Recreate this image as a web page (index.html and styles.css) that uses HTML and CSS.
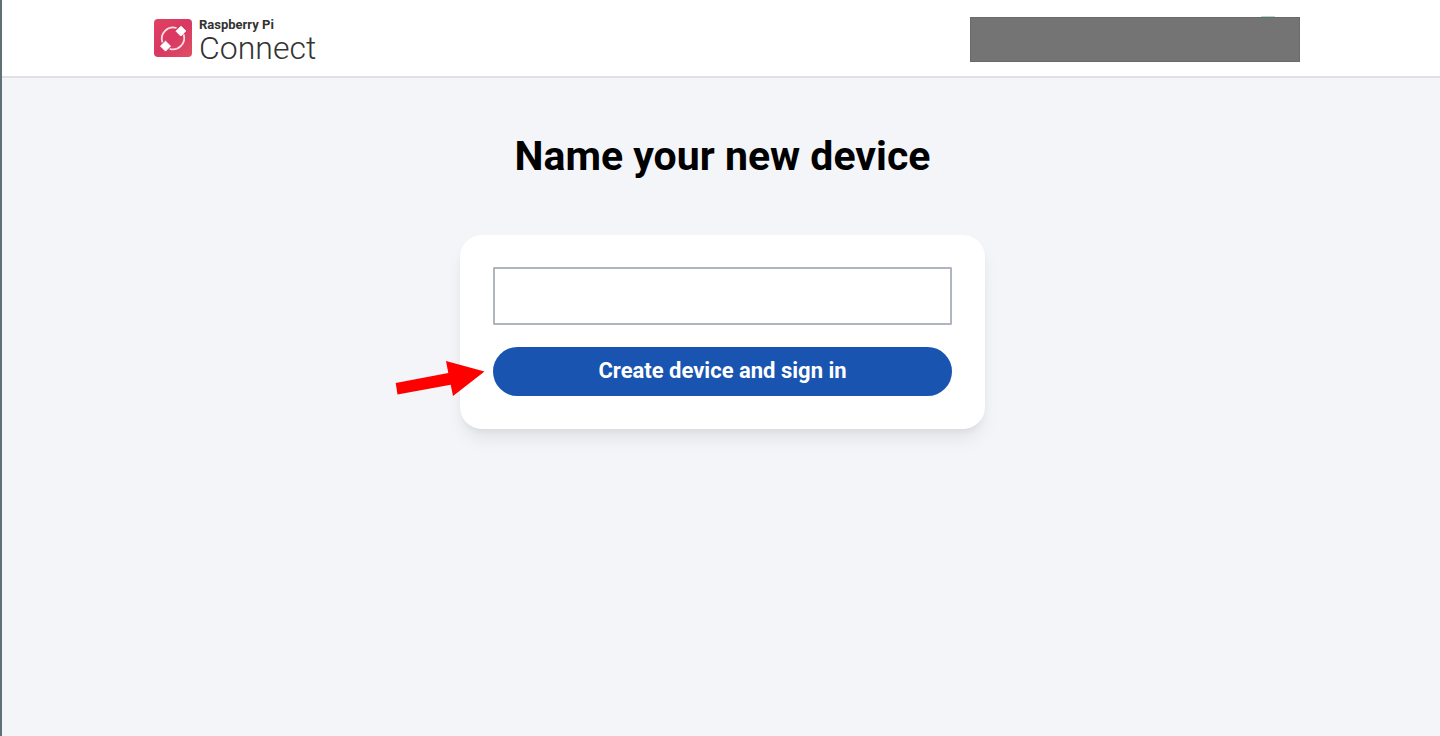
FILE: index.html
```html
<!DOCTYPE html>
<html lang="en">
<head>
<meta charset="utf-8">
<meta name="viewport" content="width=device-width, initial-scale=1">
<title>Raspberry Pi Connect</title>
<link rel="stylesheet" href="styles.css">
</head>
<body>
<header class="header">
  <div class="header-inner">
    <a class="brand" href="#">
      <svg class="brand-icon" viewBox="0 0 38 38" aria-hidden="true">
        <defs>
          <linearGradient id="brand-fill" x1="0" y1="0" x2="1" y2="1">
            <stop offset="0" stop-color="#df4260"/>
            <stop offset="0.5" stop-color="#d93862"/>
            <stop offset="1" stop-color="#df5064"/>
          </linearGradient>
        </defs>
        <rect width="38" height="38" rx="4" fill="url(#brand-fill)"/>
        <g fill="none" stroke="#fbdde3" stroke-width="1.8">
          <path d="M22.6 9A11.3 11.3 0 0 0 8.4 23.4"/>
          <path d="M29.6 15.4A11.3 11.3 0 0 1 15.6 29.8"/>
        </g>
        <path d="M27 7.2l4.8 4.8-5 5-4.8-4.8zM11.5 22.2l5 4.9-5 5-5-5z" fill="#fff" stroke="#fff" stroke-linejoin="round"/>
      </svg>
      <span class="brand-text">
        <span class="brand-top">Raspberry Pi</span>
        <span class="brand-name">Connect</span>
      </span>
    </a>
    <div class="account"></div>
  </div>
</header>
<main class="main">
  <h1 class="title">Name your new device</h1>
  <form class="card">
    <input class="name-input" type="text" aria-label="Device name">
    <button class="submit" type="button">Create device and sign in</button>
    <svg class="arrow" viewBox="0 0 90 36" aria-hidden="true">
      <path d="M0.7 22L53.3 12L51 0L89.5 10.5L58 35L55.7 23.7L2.5 33.5z" fill="#f00"/>
    </svg>
  </form>
</main>
</body>
</html>
```
FILE: styles.css
```css
* {
  box-sizing: border-box;
}

body {
  margin: 0;
  min-height: 100vh;
  border-left: 2px solid #5f7176;
  background: #f3f5f8;
  color: #000;
  font-family: Roboto, "Liberation Sans", sans-serif;
}

.header {
  border-bottom: 2px solid #e0e1e3;
  background: #fff;
}

.header-inner {
  display: flex;
  align-items: flex-start;
  justify-content: space-between;
  padding: 17px 140px 13px 152px;
}

.brand {
  display: flex;
  align-items: flex-start;
  gap: 7px;
  color: #333;
  text-decoration: none;
}

.brand-icon {
  width: 38px;
  height: 38px;
  margin-top: 2px;
}

.brand-text {
  display: flex;
  flex-direction: column;
}

.brand-top {
  font-size: 13px;
  font-weight: 700;
  line-height: 16px;
}

.brand-name {
  font-size: 32px;
  font-weight: 300;
  line-height: 30px;
}

.account {
  position: relative;
  width: 330px;
  height: 45px;
  border: 1px solid #6a6a6a;
  background: #747474;
}

/* Top edge of the avatar behind the account bar */
.account::before {
  content: "";
  position: absolute;
  top: -2px;
  right: 24px;
  width: 14px;
  height: 1px;
  border-radius: 1px;
  background: #a9dcd6;
}

.main {
  display: flex;
  flex-direction: column;
  align-items: center;
  padding: 53px 16px 48px 19px;
}

.title {
  margin: 0 0 54px;
  font-size: 41px;
  font-weight: 700;
  line-height: 50px;
}

.card {
  position: relative;
  display: flex;
  flex-direction: column;
  gap: 22px;
  width: 100%;
  max-width: 525px;
  padding: 32px 33px 33px;
  border-radius: 22px;
  background: #fff;
  box-shadow: 0 12px 18px -3px rgba(0, 0, 0, 0.08), 0 4px 6px -2px rgba(0, 0, 0, 0.05);
}

.name-input {
  width: 100%;
  height: 58px;
  padding: 0 16px;
  border: 2px solid #b0b5c0;
  border-radius: 1px;
  background: #fff;
  font: 400 22px/32px Roboto, sans-serif;
}

.submit {
  padding: 8px 24px 9px;
  border: 0;
  border-radius: 25px;
  background: #1854b0;
  color: #fff;
  font: 700 22px/32px Roboto, "Liberation Sans", sans-serif;
}

.arrow {
  position: absolute;
  top: 126px;
  left: -65px;
  width: 90px;
  height: 36px;
}
```
